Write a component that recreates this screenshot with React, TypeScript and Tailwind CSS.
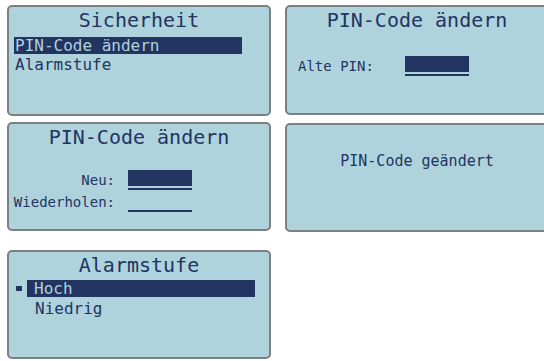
import type { ReactNode } from "react";

const font = { fontFamily: '"DejaVu Sans Mono", "Liberation Mono", monospace' };

const Panel = ({ className, children }: { className: string; children: ReactNode }) => (
    <div className={`w-[264px] shrink-0 rounded-[5px] border-2 border-[#7d7f83] bg-[#aed3dd] text-[#233460] ${className}`}>
        {children}
    </div>
);

const Title = ({ children }: { children: ReactNode }) => (
    <div className="text-center text-[20px] leading-[24px] pt-[1px]">{children}</div>
);

const Field = ({ filled }: { filled: boolean }) => (
    <div className="flex flex-col w-[64px]">
        <div className={`h-[16px] ${filled ? "bg-[#233460]" : ""}`} />
        <div className="h-[2px] mt-[2px] bg-[#233460]" />
    </div>
);

const App = () => {
    return (
        <div className="w-[544px] h-[361px] overflow-hidden bg-white flex gap-[14px] pl-[7px]" style={font}>
            <div className="flex flex-col">
                <Panel className="mt-[5px] h-[111px]">
                    <Title>Sicherheit</Title>
                    <div className="mt-[5px] pl-[5px] text-[16px] leading-[17px]">
                        <div className="w-[228px] h-[17px] bg-[#233460] text-[#aed3dd] pl-[1px]">PIN-Code ändern</div>
                        <div className="h-[17px] mt-[2px] pl-[1px]">Alarmstufe</div>
                    </div>
                </Panel>

                <Panel className="mt-[6px] h-[109px]">
                    <Title>PIN-Code ändern</Title>
                    <div className="mt-[21px] grid grid-cols-[106px_64px] gap-x-[13px] gap-y-[2px] items-end text-[14px] leading-[20px]">
                        <span className="text-right">Neu:</span>
                        <Field filled />
                        <span className="text-right">Wiederholen:</span>
                        <Field filled={false} />
                    </div>
                </Panel>

                <Panel className="mt-[19px] h-[109px]">
                    <Title>Alarmstufe</Title>
                    <div className="mt-[3px] text-[16px] leading-[17px]">
                        <div className="flex items-center">
                            <span className="ml-[7px] w-[6px] h-[5px] bg-[#233460]" />
                            <div className="ml-[5px] w-[228px] h-[17px] bg-[#233460] text-[#aed3dd] pl-[7px]">Hoch</div>
                        </div>
                        <div className="h-[17px] mt-[3px] pl-[26px]">Niedrig</div>
                    </div>
                </Panel>
            </div>

            <div className="flex flex-col">
                <Panel className="mt-[5px] h-[110px]">
                    <Title>PIN-Code ändern</Title>
                    <div className="mt-[24px] flex items-end pl-[11px] text-[14px] leading-[20px]">
                        <span className="w-[107px]">Alte PIN:</span>
                        <Field filled />
                    </div>
                </Panel>

                <Panel className="mt-[8px] h-[109px]">
                    <div className="pt-[26px] text-center text-[15px] leading-[20px]">PIN-Code geändert</div>
                </Panel>
            </div>
        </div>
    );
};

export default App;
